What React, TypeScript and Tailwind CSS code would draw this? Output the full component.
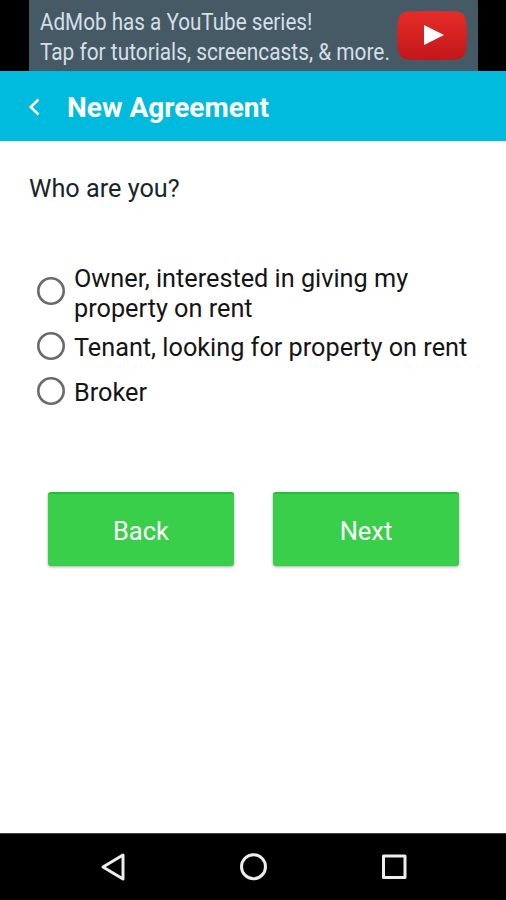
const options = [
  { id: "owner", lines: ["Owner, interested in giving my", "property on rent"], row: "h-[64px]", text: "pt-[3px]", ring: "mb-[2px]" },
  { id: "tenant", lines: ["Tenant, looking for property on rent"], row: "h-[45px]", text: "pt-[2px]", ring: "mb-[1px]" },
  { id: "broker", lines: ["Broker"], row: "h-[45px]", text: "pt-[2px]", ring: "mb-[1px]" },
];

function AdBanner() {
  return (
    <div className="flex h-[71px] shrink-0 bg-black pl-[28.5px]">
      <div className="flex w-[449.5px] bg-[#455a64] pl-[11.5px]">
        <div className="w-[357px] pt-[8px] text-[23px] leading-[30px] whitespace-nowrap text-[#d5dfe8]">
          <p className="origin-left scale-x-[0.898]">AdMob has a YouTube series!</p>
          <p className="origin-left scale-x-[0.906]">Tap for tutorials, screencasts, &amp; more.</p>
        </div>
        <svg className="mt-[11px] h-[49px] w-[70px] shrink-0" viewBox="0 0 70 49">
          <defs>
            <linearGradient id="play" x1="0" y1="0" x2="0" y2="1">
              <stop offset="0" stopColor="#e52d27" />
              <stop offset="1" stopColor="#c3171b" />
            </linearGradient>
          </defs>
          <path d="M11 .6Q35-.4 59 .6Q68 1 69 10Q71 24.5 69 39Q68 48 59 48.4Q35 49.4 11 48.4Q2 48 1 39Q-1 24.5 1 10Q2 1 11 .6Z" fill="url(#play)" />
          <path d="M27 14L47 24L27 34Z" fill="white" />
        </svg>
      </div>
    </div>
  );
}

export default function App() {
  return (
    <div className="flex h-[900px] w-[506px] flex-col overflow-hidden bg-white font-['Roboto',sans-serif] text-[#151515]">
      <AdBanner />
      <header className="flex h-[70px] shrink-0 items-center bg-[#00bbde] pl-[28px] text-white">
        <svg className="mt-[2px] h-[18px] w-[12px]" viewBox="0 0 12 18" fill="none" stroke="currentColor" strokeWidth="2.5">
          <path d="M10.5 1.5L2.7 9L10.5 16.5" />
        </svg>
        <h1 className="ml-[27px] pt-[4px] text-[28px] leading-[34px] font-bold whitespace-nowrap">New Agreement</h1>
      </header>
      <main className="flex grow flex-col pt-[33px] text-[25.25px] leading-[30px]">
        <h2 className="pl-[29px] text-[#18262a]">Who are you?</h2>
        <div className="mt-[56px] flex flex-col pl-[37px]">
          {options.map((o) => (
            <div key={o.id} className={`flex items-center ${o.row}`}>
              <svg className={`size-[28px] shrink-0 ${o.ring}`} viewBox="0 0 28 28" fill="none" stroke="#6a6a6a" strokeWidth="2.6">
                <circle cx="14" cy="14" r="12.7" />
              </svg>
              <span className={`ml-[9px] whitespace-nowrap ${o.text}`}>
                {o.lines.map((l) => (
                  <span key={l} className="block">{l}</span>
                ))}
              </span>
            </div>
          ))}
        </div>
        <div className="mt-[78px] flex gap-[39px] pl-[48px] text-white">
          {["Back", "Next"].map((label) => (
            <button
              key={label}
              className="h-[74px] w-[186px] rounded-[3px] border-t-2 border-[#20c038] bg-[#39cf4b] pt-[1px] text-[25.5px] shadow-[0_1px_3px_rgba(0,0,0,0.35)]"
            >
              {label}
            </button>
          ))}
        </div>
      </main>
      <nav className="flex h-[67px] shrink-0 items-center border-t border-[#444] bg-black">
        <svg className="h-[66px] w-[506px]" viewBox="0 834 506 66" fill="none" stroke="#eee" strokeWidth="3" strokeLinejoin="round">
          <path d="M123 855V879L103 867Z" />
          <circle cx="253.5" cy="866.7" r="12" />
          <rect x="383.5" y="856" width="21.5" height="21.5" />
        </svg>
      </nav>
    </div>
  );
}
